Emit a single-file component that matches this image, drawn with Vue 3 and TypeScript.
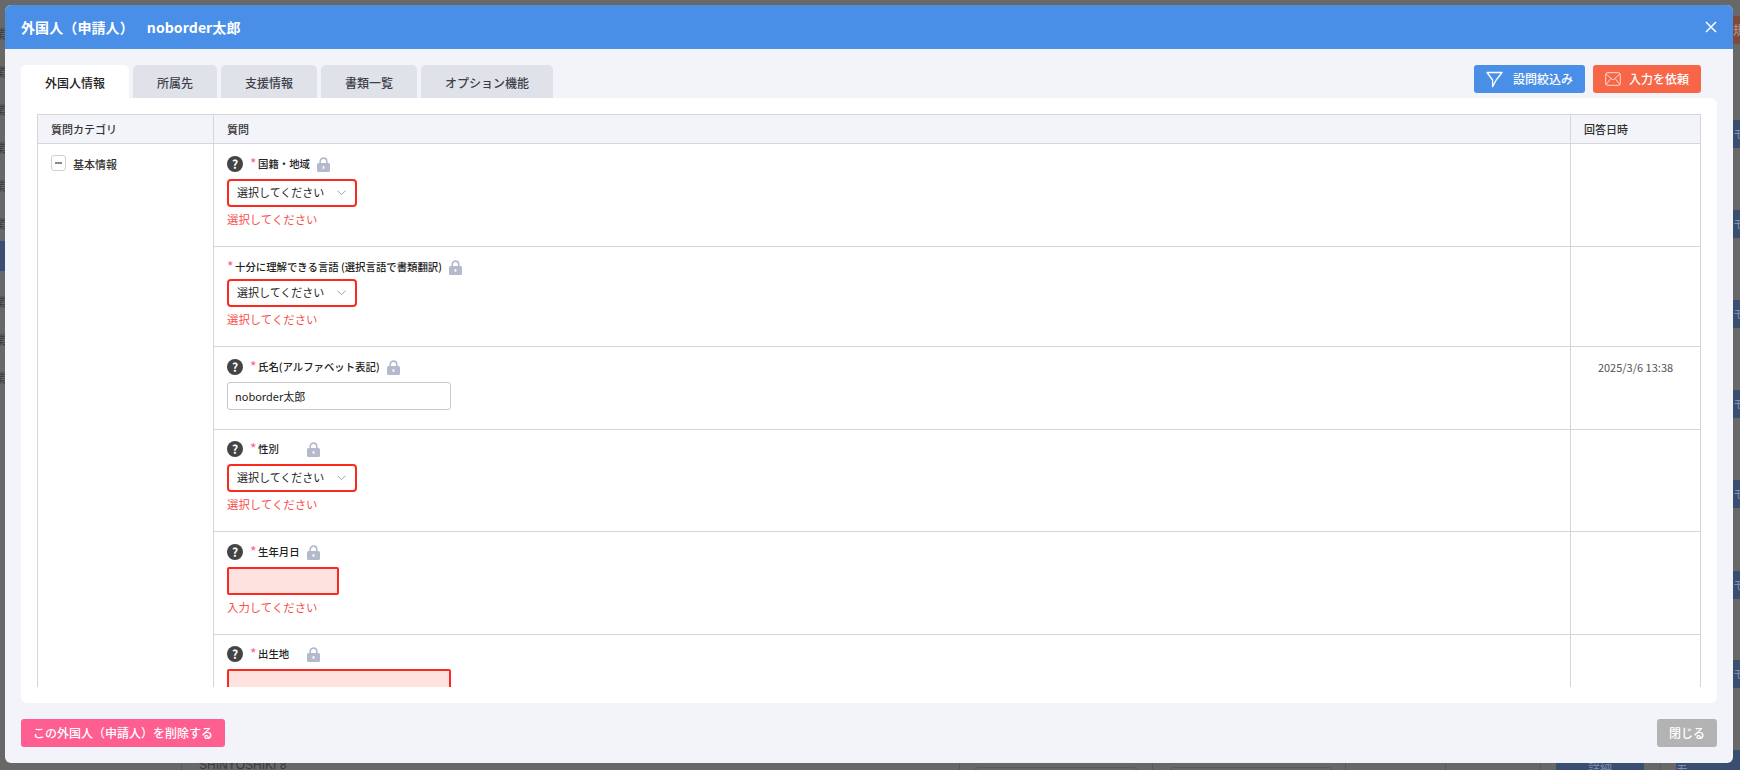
<script setup lang="ts">
interface Field {
  label: string
  help: boolean
  rowClass?: string
  control: 'select' | 'input' | 'invalid-date' | 'invalid-text'
  value?: string
  error?: string
  answered?: string
}

const tabs: string[] = ['外国人情報', '所属先', '支援情報', '書類一覧', 'オプション機能']

const fields: Field[] = [
  { label: '国籍・地域', help: true, rowClass: 'low', control: 'select', error: '選択してください' },
  { label: '十分に理解できる言語 (選択言語で書類翻訳)', help: false, control: 'select', error: '選択してください' },
  { label: '氏名(アルファベット表記)', help: true, rowClass: 'low', control: 'input', value: 'noborder太郎', answered: '2025/3/6 13:38' },
  { label: '性別', help: true, control: 'select', error: '選択してください' },
  { label: '生年月日', help: true, rowClass: 'low', control: 'invalid-date', error: '入力してください' },
  { label: '出生地', help: true, control: 'invalid-text' },
]

const sideBlocks: number[] = [120, 210, 300, 390, 480, 571, 660, 750]
const leftMarks: number[] = [26, 64, 102, 140, 178, 216, 294, 332, 370]
const bottomRules: number[] = [181, 959, 1152, 1345, 1445, 1540, 1660]
const bottomBoxes: number[] = [975, 1170]
</script>

<template>
  <div class="screen">
    <div class="backdrop" aria-hidden="true">
      <span class="orange-block">規</span>
      <span v-for="y in sideBlocks" :key="y" class="side-block" :style="{ top: y + 'px' }">モ</span>
      <span v-for="y in leftMarks" :key="y" class="left-mark" :style="{ top: y + 'px' }">業</span>
      <span class="left-block"></span>
      <span class="bottom-name">SHINYOSHIKI 8</span>
      <span v-for="x in bottomRules" :key="x" class="bottom-rule" :style="{ left: x + 'px' }"></span>
      <span v-for="x in bottomBoxes" :key="x" class="bottom-box" :style="{ left: x + 'px' }"></span>
      <span class="bottom-detail">詳細</span>
      <span class="bottom-memo">モ</span>
    </div>

    <section class="modal">
      <header class="modal-head">
        <h1 class="modal-title">外国人（申請人）<span class="applicant">noborder太郎</span></h1>
        <button class="close-x" type="button" aria-label="閉じる">
          <svg width="12" height="12" viewBox="0 0 12 12">
            <path d="M1 1 11 11M11 1 1 11" stroke="#fff" stroke-width="1.5" fill="none" />
          </svg>
        </button>
      </header>

      <div class="modal-body">
        <div class="tabbar">
          <div class="tabs">
            <div v-for="(tab, i) in tabs" :key="tab" class="tab" :class="{ active: i === 0 }">{{ tab }}</div>
          </div>
          <div class="actions">
            <button class="action blue" type="button">
              <svg width="17" height="17" viewBox="0 0 17 17">
                <path d="M1 1.5h15L10.2 9 6.6 15.8V9Z" fill="none" stroke="#fff" stroke-width="1.3" stroke-linejoin="round" />
              </svg>
              <span class="action-text">設問絞込み</span>
            </button>
            <button class="action orange" type="button">
              <svg width="16" height="14" viewBox="0 0 16 14">
                <rect x="0.7" y="0.7" width="14.6" height="12.6" rx="2" fill="none" stroke="#fff" stroke-opacity=".75" stroke-width="1" />
                <path d="M1 2l7 6 7-6M1 12.5l5-6M15 12.5l-5-6" fill="none" stroke="#fff" stroke-opacity=".75" stroke-width="1" />
              </svg>
              <span class="action-text">入力を依頼</span>
            </button>
          </div>
        </div>

        <div class="card">
          <div class="table">
            <div class="th">質問カテゴリ</div>
            <div class="th">質問</div>
            <div class="th">回答日時</div>

            <div class="category">
              <span class="collapse"><i></i></span>
              <span class="category-name">基本情報</span>
            </div>

            <template v-for="(field, i) in fields" :key="field.label">
              <div class="question" :class="field.rowClass" :style="{ gridRow: i + 2, gridColumn: 2 }">
                <div class="label-row" :class="{ plain: !field.help }">
                  <span v-if="field.help" class="help">?</span>
                  <span class="star">*</span>
                  <span class="label">{{ field.label }}</span>
                  <svg class="lock" width="13" height="15" viewBox="0 0 13 15">
                    <path d="M3.2 7V4.4a3.3 3.3 0 0 1 6.6 0V7" fill="none" stroke="#b4b9cc" stroke-width="1.6" />
                    <rect x="0" y="6" width="13" height="9" rx="1.5" fill="#b4b9cc" />
                    <rect x="5.6" y="9.2" width="1.8" height="2.6" fill="#fff" />
                  </svg>
                </div>

                <div v-if="field.control === 'select'" class="select">
                  <span class="select-text">選択してください</span>
                  <svg width="9" height="6" viewBox="0 0 9 6">
                    <path d="M.5.7 4.500 4.700 8.500.7" fill="none" stroke="#9a9fae" stroke-width="1" />
                  </svg>
                </div>
                <input v-else-if="field.control === 'input'" class="text-input" :value="field.value" />
                <div v-else-if="field.control === 'invalid-date'" class="invalid date"></div>
                <div v-else class="invalid long"></div>

                <p v-if="field.error" class="error">{{ field.error }}</p>
              </div>
              <div class="answered" :style="{ gridRow: i + 2, gridColumn: 3 }">{{ field.answered }}</div>
            </template>
          </div>
        </div>

        <footer class="modal-foot">
          <button class="foot-btn danger" type="button">この外国人（申請人）を削除する</button>
          <button class="foot-btn muted" type="button">閉じる</button>
        </footer>
      </div>
    </section>
  </div>
</template>

<style scoped>
.screen {
  position: relative;
  width: 1740px;
  height: 770px;
  overflow: hidden;
  background: #686868;
  font-family: "Noto Sans CJK JP", "Noto Sans", sans-serif;
  color: #222;
}
.backdrop span {
  position: absolute;
}
.orange-block {
  left: 1733px;
  top: 16px;
  width: 7px;
  height: 28px;
  background: #7d4a3e;
  color: #b99a93;
  font-size: 12px;
  line-height: 28px;
  overflow: hidden;
}
.side-block {
  left: 1733px;
  width: 7px;
  height: 28px;
  background: #394e70;
  color: #8090a8;
  font-size: 12px;
  line-height: 28px;
  overflow: hidden;
}
.left-mark {
  left: 0;
  width: 5px;
  height: 16px;
  color: #3c3c3c;
  font-size: 12px;
  line-height: 16px;
  overflow: hidden;
  text-indent: -6px;
}
.left-block {
  left: 0;
  top: 241px;
  width: 5px;
  height: 30px;
  background: #394e70;
}
.bottom-name {
  left: 199px;
  top: 757px;
  color: #3a3a3a;
  font-family: "Liberation Sans", sans-serif;
  font-size: 12px;
  line-height: 16px;
}
.bottom-rule {
  top: 763px;
  width: 1px;
  height: 7px;
  background: #5a5a5a;
}
.bottom-box {
  top: 767px;
  width: 160px;
  height: 6px;
  border: 1px solid #5a5a5a;
  border-radius: 3px;
}
.bottom-detail {
  left: 1556px;
  top: 760px;
  width: 88px;
  height: 10px;
  background: #394e70;
  color: #8090a8;
  font-size: 12px;
  line-height: 18px;
  text-align: center;
  overflow: hidden;
}
.bottom-memo {
  left: 1676px;
  top: 760px;
  width: 64px;
  height: 10px;
  background: #394e70;
  color: #8090a8;
  font-size: 12px;
  line-height: 18px;
  overflow: hidden;
}

.modal {
  position: absolute;
  left: 5px;
  top: 5px;
  width: 1728px;
  height: 758px;
  display: flex;
  flex-direction: column;
  border-radius: 6px;
  overflow: hidden;
  background: #f3f4f9;
}
.modal-head {
  flex: none;
  height: 44px;
  display: flex;
  align-items: center;
  justify-content: space-between;
  padding: 0 16px 0 16px;
  background: #4a8fe7;
}
.modal-title {
  margin: 0;
  color: #fff;
  font-size: 14px;
  font-weight: 700;
  letter-spacing: 0.1px;
}
.applicant {
  margin-left: 13px;
}
.close-x {
  display: flex;
  padding: 0;
  border: 0;
  background: none;
}

.modal-body {
  flex: 1;
  display: flex;
  flex-direction: column;
  padding: 16px 16px 16px 16px;
  min-height: 0;
}
.tabbar {
  flex: none;
  height: 33px;
  display: flex;
  justify-content: space-between;
  align-items: flex-start;
}
.tabs {
  display: flex;
  gap: 4px;
}
.tab {
  height: 33px;
  padding: 0 24px;
  border-radius: 5px 5px 0 0;
  background: #e0e2ea;
  color: #3c3f48;
  font-size: 12px;
  line-height: 35px;
  font-weight: 500;
}
.tab.active {
  background: #fff;
  color: #222;
}
.actions {
  display: flex;
  gap: 8px;
  padding-right: 16px;
}
.action {
  height: 28px;
  display: flex;
  align-items: center;
  justify-content: center;
  border: 0;
  border-radius: 3px;
  color: #fff;
  font-family: inherit;
  font-size: 12px;
  font-weight: 500;
}
.action-text {
  margin-top: -2px;
}
.action.blue {
  width: 111px;
  gap: 10px;
  background: #4a8fe7;
}
.action.orange {
  width: 108px;
  gap: 8px;
  background: #f66647;
}

.card {
  flex: 1;
  min-height: 0;
  padding: 16px;
  background: #fff;
  border-radius: 0 6px 6px 6px;
}
.table {
  height: 100%;
  overflow: hidden;
  display: grid;
  grid-template-columns: 176px 1357px 130px;
  grid-template-rows: 29px 103px 100px 83px 102px 103px 120px;
  border-left: 1px solid #d6d6da;
  border-top: 1px solid #d6d6da;
  box-sizing: border-box;
  width: 1664px;
}
.th {
  display: flex;
  align-items: center;
  padding-left: 13px;
  background: #f3f4f9;
  border-right: 1px solid #d6d6da;
  border-bottom: 1px solid #d6d6da;
  box-sizing: border-box;
  color: #333;
  font-size: 11px;
  font-weight: 500;
}
.category {
  grid-column: 1;
  grid-row: 2 / 8;
  display: flex;
  align-items: flex-start;
  gap: 7px;
  padding: 11px 0 0 13px;
  border-right: 1px solid #d6d6da;
  box-sizing: border-box;
  color: #333;
  font-size: 11px;
  font-weight: 500;
  line-height: 16px;
}
.category-name {
  margin-top: 1px;
}
.collapse {
  width: 15px;
  height: 16px;
  box-sizing: border-box;
  display: flex;
  align-items: center;
  justify-content: center;
  border: 1px solid #cfcfd4;
  border-radius: 3px;
}
.collapse i {
  width: 7px;
  height: 1.5px;
  background: #8a8a8a;
}
.question {
  padding: 11px 0 0 13px;
  border-right: 1px solid #d6d6da;
  border-bottom: 1px solid #d6d6da;
  box-sizing: border-box;
  min-width: 0;
}
.question.low {
  padding-top: 12px;
}
.label-row {
  height: 16px;
  margin-bottom: 7px;
  display: flex;
  align-items: center;
}
.label-row.plain {
  margin-top: 1px;
  margin-bottom: 4px;
}
.help {
  flex: none;
  width: 16px;
  height: 16px;
  margin-right: 7px;
  border-radius: 50%;
  background: #444;
  color: #fff;
  font-size: 12px;
  font-weight: 700;
  line-height: 16px;
  text-align: center;
}
.star {
  flex: none;
  width: 8px;
  align-self: flex-start;
  color: #f5609a;
  font-size: 14px;
  line-height: 14px;
}
.label {
  min-width: 42px;
  margin-right: 7px;
  color: #222;
  font-size: 10.4px;
  font-weight: 500;
  line-height: 16px;
  white-space: nowrap;
}
.lock {
  flex: none;
}
.select {
  width: 130px;
  height: 28px;
  box-sizing: border-box;
  display: flex;
  align-items: center;
  gap: 13px;
  padding-left: 8px;
  border: 2px solid #fb2a20;
  border-radius: 4px;
  background: #fff;
  color: #222;
  font-size: 11px;
}
.select-text {
  margin-top: -2px;
}
.text-input {
  display: block;
  width: 224px;
  height: 28px;
  box-sizing: border-box;
  padding: 0 7px;
  border: 1px solid #c9c9cc;
  border-radius: 3px;
  color: #222;
  font-family: inherit;
  font-size: 11px;
  outline: none;
}
.invalid {
  height: 28px;
  box-sizing: border-box;
  border: 2px solid #fb2a20;
  border-radius: 2px;
  background: #fee2df;
}
.invalid.date {
  width: 112px;
}
.invalid.long {
  width: 224px;
}
.error {
  margin: 4px 0 0;
  color: #f8504c;
  font-size: 11.400px;
  line-height: 16px;
}
.answered {
  padding-top: 12px;
  border-right: 1px solid #d6d6da;
  border-bottom: 1px solid #d6d6da;
  box-sizing: border-box;
  color: #555;
  font-size: 11px;
  line-height: 16px;
  text-align: center;
}
.modal-foot {
  flex: none;
  display: flex;
  justify-content: space-between;
  padding-top: 16px;
}
.foot-btn {
  height: 28px;
  padding: 0 0 2px;
  border: 0;
  border-radius: 3px;
  color: #fff;
  font-family: inherit;
  font-size: 12px;
  font-weight: 500;
}
.foot-btn.danger {
  width: 204px;
  background: #fe5f90;
}
.foot-btn.muted {
  width: 60px;
  background: #b3b3b3;
}
</style>
